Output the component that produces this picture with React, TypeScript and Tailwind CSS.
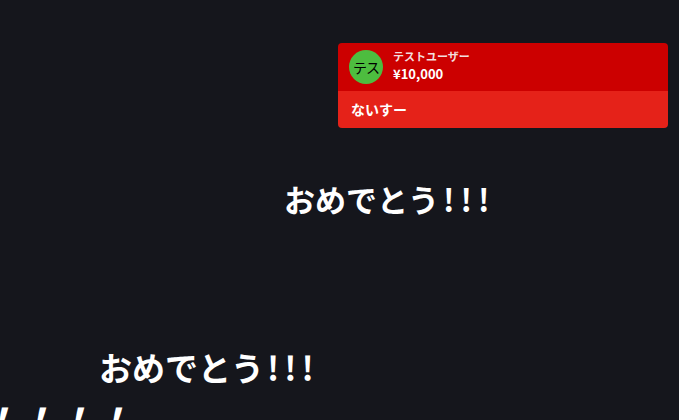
const font = { fontFamily: '"Noto Sans CJK JP", "Noto Sans", sans-serif' };

export default function App() {
  return (
    <div className="relative w-[679px] h-[420px] overflow-hidden bg-[#15161c]" style={font}>
      {/* super chat card */}
      <div className="flex justify-end pt-[43px] pr-[11px]">
        <div className="w-[330px] rounded-[4px] overflow-hidden">
          <div className="flex items-center gap-[10px] bg-[#cc0000] px-[11px] h-[48px]">
            <div className="w-[34px] h-[34px] rounded-full bg-[#4dbd3f] flex items-center justify-center text-[14px] text-black tracking-[-1px]">
              テス
            </div>
            <div className="flex flex-col leading-none -mt-[4px]">
              <span className="text-[11px] font-bold text-[#f3dede]">テストユーザー</span>
              <span className="text-[13px] font-bold text-white mt-[5px]">¥10,000</span>
            </div>
          </div>
          <div className="bg-[#e52219] h-[37px] flex items-center px-[13px] text-[14px] font-bold text-white">
            ないすー
          </div>
        </div>
      </div>

      {/* flowing comments */}
      <div className="absolute left-[284px] top-[183px] text-[31px] font-bold text-white leading-none whitespace-nowrap">
        おめでとう<span className="tracking-[6px] ml-[4px]">!!!</span>
      </div>
      <div className="absolute left-[99px] top-[351px] text-[33px] font-bold text-white leading-none whitespace-nowrap">
        おめでとう<span className="tracking-[5px] ml-[3px]">!!!</span>
      </div>
      <div className="absolute left-[-21px] top-[401px] text-[38px] font-bold italic text-white leading-none whitespace-nowrap">
        ！！！！
      </div>
    </div>
  );
}
